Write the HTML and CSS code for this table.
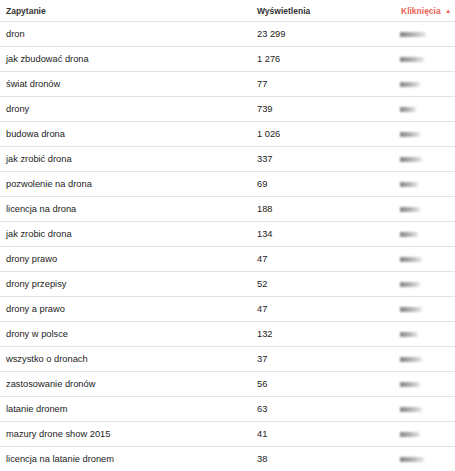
FILE: index.html
```html
<!DOCTYPE html>
<html lang="pl">
<head>
<meta charset="utf-8">
<link rel="stylesheet" href="styles.css">
</head>
<body>
<div class="table">
  <div class="row head">
    <div class="c1">Zapytanie</div>
    <div class="c2">Wyświetlenia</div>
    <div class="c3 sorted">Kliknięcia <span class="arrow">▲</span></div>
  </div>
  <div class="row"><div class="c1">dron</div><div class="c2">23 299</div><div class="c3"><span class="blur" style="width:26px"></span></div></div>
  <div class="row"><div class="c1">jak zbudować drona</div><div class="c2">1 276</div><div class="c3"><span class="blur" style="width:24px"></span></div></div>
  <div class="row"><div class="c1">świat dronów</div><div class="c2">77</div><div class="c3"><span class="blur" style="width:20px"></span></div></div>
  <div class="row"><div class="c1">drony</div><div class="c2">739</div><div class="c3"><span class="blur" style="width:16px"></span></div></div>
  <div class="row"><div class="c1">budowa drona</div><div class="c2">1 026</div><div class="c3"><span class="blur" style="width:20px"></span></div></div>
  <div class="row"><div class="c1">jak zrobić drona</div><div class="c2">337</div><div class="c3"><span class="blur" style="width:22px"></span></div></div>
  <div class="row"><div class="c1">pozwolenie na drona</div><div class="c2">69</div><div class="c3"><span class="blur" style="width:18px"></span></div></div>
  <div class="row"><div class="c1">licencja na drona</div><div class="c2">188</div><div class="c3"><span class="blur" style="width:20px"></span></div></div>
  <div class="row"><div class="c1">jak zrobic drona</div><div class="c2">134</div><div class="c3"><span class="blur" style="width:18px"></span></div></div>
  <div class="row"><div class="c1">drony prawo</div><div class="c2">47</div><div class="c3"><span class="blur" style="width:22px"></span></div></div>
  <div class="row"><div class="c1">drony przepisy</div><div class="c2">52</div><div class="c3"><span class="blur" style="width:20px"></span></div></div>
  <div class="row"><div class="c1">drony a prawo</div><div class="c2">47</div><div class="c3"><span class="blur" style="width:22px"></span></div></div>
  <div class="row"><div class="c1">drony w polsce</div><div class="c2">132</div><div class="c3"><span class="blur" style="width:18px"></span></div></div>
  <div class="row"><div class="c1">wszystko o dronach</div><div class="c2">37</div><div class="c3"><span class="blur" style="width:22px"></span></div></div>
  <div class="row"><div class="c1">zastosowanie dronów</div><div class="c2">56</div><div class="c3"><span class="blur" style="width:20px"></span></div></div>
  <div class="row"><div class="c1">latanie dronem</div><div class="c2">63</div><div class="c3"><span class="blur" style="width:22px"></span></div></div>
  <div class="row"><div class="c1">mazury drone show 2015</div><div class="c2">41</div><div class="c3"><span class="blur" style="width:20px"></span></div></div>
  <div class="row"><div class="c1">licencja na latanie dronem</div><div class="c2">38</div><div class="c3"><span class="blur" style="width:24px"></span></div></div>
</div>
</body>
</html>
```
FILE: styles.css
```css
html, body {
  margin: 0;
  padding: 0;
  background: #fff;
}
body {
  font-family: "Liberation Sans", Arial, sans-serif;
  font-size: 9.3px;
  color: #222;
}
.table {
  width: 455px;
}
.row {
  display: grid;
  grid-template-columns: 251px 139px 1fr;
  align-items: center;
  height: 25px;
  border-bottom: 1px solid #e3e3e3;
  box-sizing: border-box;
  padding-left: 6px;
  white-space: nowrap;
}
.row.head {
  height: 22px;
  font-weight: bold;
  font-size: 8.5px;
  color: #333;
}
.c3 {
  padding-left: 5px;
}
.sorted {
  color: #ec6454;
}
.arrow {
  font-size: 6.5px;
  margin-left: 2px;
  vertical-align: 1px;
}
.blur {
  display: inline-block;
  height: 5px;
  background: linear-gradient(90deg, #666, #aaa 60%, #e6e6e6);
  filter: blur(1.3px);
  margin-left: -1px;
  vertical-align: middle;
  opacity: 0.8;
}
```
